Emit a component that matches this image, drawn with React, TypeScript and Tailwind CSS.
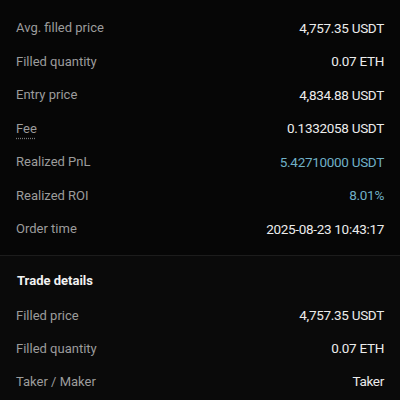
import React from 'react';

interface Row {
  label: string;
  value: string;
  tone?: 'blue';
  dotted?: boolean;
}

const orderRows: Row[] = [
  { label: 'Avg. filled price', value: '4,757.35 USDT' },
  { label: 'Filled quantity', value: '0.07 ETH' },
  { label: 'Entry price', value: '4,834.88 USDT' },
  { label: 'Fee', value: '0.1332058 USDT', dotted: true },
  { label: 'Realized PnL', value: '5.42710000 USDT', tone: 'blue' },
  { label: 'Realized ROI', value: '8.01%', tone: 'blue' },
  { label: 'Order time', value: '2025-08-23 10:43:17' },
];

const tradeRows: Row[] = [
  { label: 'Filled price', value: '4,757.35 USDT' },
  { label: 'Filled quantity', value: '0.07 ETH' },
  { label: 'Taker / Maker', value: 'Taker' },
];

const DetailRow: React.FC<{ row: Row; height: string }> = ({ row, height }) => (
  <div className={`flex items-center justify-between ${height}`}>
    <span
      className={`text-[13px] text-[#9c9c9c] ${
        row.dotted ? 'underline decoration-dotted decoration-[#777] underline-offset-[5px]' : ''
      }`}
    >
      {row.label}
    </span>
    <span
      className={`text-[13.5px] font-normal tracking-[-0.3px] ${
        row.tone === 'blue' ? 'text-[#6fb0c6]' : 'text-[#ececec]'
      }`}
    >
      {row.value}
    </span>
  </div>
);

export default function App() {
  return (
    <div className="w-[400px] h-[400px] overflow-hidden bg-[#0a0a0a] font-['Roboto',sans-serif]">
      <div className="px-4 pt-[11px] pb-[9px] bg-[#060606]">
        {orderRows.map((row) => (
          <DetailRow key={row.label} row={row} height="h-[33.5px]" />
        ))}
      </div>
      <div className="h-px bg-[#1c1c1c]" />
      <div className="px-4">
        <div className="pt-[15px] pb-[9px] pl-px text-[13px] font-bold text-[#f2f2f2]">Trade details</div>
        {tradeRows.map((row) => (
          <DetailRow key={row.label} row={row} height="h-[33px]" />
        ))}
      </div>
    </div>
  );
}
